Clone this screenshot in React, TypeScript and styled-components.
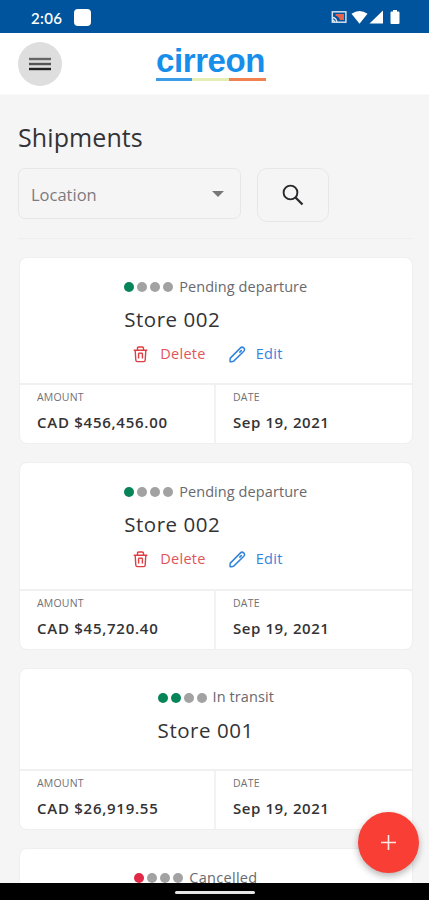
import React from "react";
import styled, { createGlobalStyle } from "styled-components";

const GlobalStyle = createGlobalStyle`
  * { box-sizing: border-box; }
  body { margin: 0; font-family: "Open Sans", "Noto Sans", sans-serif; color: #333336; background: #f6f5f6; }
  button { font: inherit; padding: 0; border: 0; background: none; }
`;

const Screen = styled.div`
  position: relative;
  display: flex;
  flex-direction: column;
  width: 429px;
  height: 900px;
  overflow: hidden;
  background: #f6f5f6;
`;

const StatusBar = styled.div`
  flex: none;
  display: flex;
  align-items: center;
  height: 33px;
  padding: 2px 28px 0 31px;
  background: #00549d;
  color: #fff;
`;

const Clock = styled.span`
  width: 43px;
  font: 600 15px/18px Lato, sans-serif;
  letter-spacing: 0.35px;
  white-space: nowrap;
`;

const Notification = styled.span`
  width: 17px;
  height: 17px;
  border-radius: 4px;
  background: #fff;
`;

const StatusIcons = styled.svg`
  margin-left: auto;
  display: block;
`;

const Header = styled.header`
  flex: none;
  display: grid;
  grid-template-columns: 44px 1fr 44px;
  align-items: center;
  height: 62px;
  padding: 0 25px 0 18px;
  background: #fff;
  border-bottom: 1px solid #f9f8fa;
`;

const MenuButton = styled.button`
  display: grid;
  place-items: center;
  width: 44px;
  height: 44px;
  border-radius: 50%;
  background: #dfdedf;
`;

const Logo = styled.div`
  justify-self: center;
  width: 110px;
  margin-top: -2px;
`;

const LogoWord = styled.div`
  font: 700 33px/34px "Liberation Sans", sans-serif;
  letter-spacing: -0.4px;
  white-space: nowrap;
  color: #168eea;
`;

const LogoRule = styled.div`
  height: 3px;
  background: linear-gradient(90deg, #3c9ce8 0 36px, #e4edb4 36px 73px, #f28150 73px);
`;

const Content = styled.main`
  flex: 1;
  min-height: 0;
  overflow: hidden;
  padding: 24px 16.5px 0 18px;
`;

const Title = styled.h1`
  margin: 0;
  font-size: 25px;
  line-height: 36px;
  font-weight: 400;
  letter-spacing: 0.1px;
`;

const Filters = styled.div`
  display: flex;
  gap: 16px;
  padding: 13px 0 16px;
  border-bottom: 1px solid #eeeeef;
`;

const Select = styled.div`
  display: flex;
  align-items: center;
  justify-content: space-between;
  width: 223px;
  height: 51px;
  padding: 1px 16px 0 12px;
  border: 1px solid #e9e6e9;
  border-radius: 7px;
  font-size: 16.5px;
  color: #7c7b7f;
`;

const SearchButton = styled.button`
  display: grid;
  place-items: center;
  width: 72px;
  height: 54px;
  border: 1px solid #e7e6e8;
  border-radius: 10px;
`;

const CardList = styled.div`
  display: flex;
  flex-direction: column;
  gap: 18px;
  padding: 18px 0 0 1px;
`;

const Card = styled.article<{ $compact?: boolean }>`
  flex: none;
  height: ${(p) => (p.$compact ? 162.5 : 187.3)}px;
  display: flex;
  flex-direction: column;
  border: 1px solid #f0eff0;
  border-radius: 8px;
  background: #fff;
`;

const Summary = styled.div<{ $minWidth?: number }>`
  flex: 1;
  display: flex;
  flex-direction: column;
  align-items: flex-start;
  align-self: center;
  min-width: ${(p) => p.$minWidth ?? 0}px;
  padding-top: 16px;
`;

const StatusLine = styled.div`
  display: flex;
  align-items: center;
  gap: 3px;
  height: 24px;
`;

const Dot = styled.span<{ $color: string }>`
  width: 10px;
  height: 10px;
  margin-top: 2px;
  border-radius: 50%;
  background: ${(p) => p.$color};
`;

const StatusText = styled.span<{ $tracking: number }>`
  margin-left: 3px;
  font-size: 14.5px;
  letter-spacing: ${(p) => p.$tracking}px;
  white-space: nowrap;
  color: #69696d;
`;

const StoreName = styled.div`
  margin-top: 6px;
  font-size: 20.5px;
  line-height: 30px;
  letter-spacing: 0.55px;
  white-space: nowrap;
`;

const Actions = styled.div`
  display: flex;
  align-items: center;
  gap: 23px;
  height: 22px;
  margin-top: 9px;
  padding-left: 9px;
`;

const Action = styled.button<{ $color: string; $gap: number }>`
  display: flex;
  align-items: center;
  gap: ${(p) => p.$gap}px;
  font-size: 14.5px;
  line-height: 22px;
  letter-spacing: 0.3px;
  color: ${(p) => p.$color};
`;

const Details = styled.div`
  display: grid;
  grid-template-columns: 194px 1fr;
  height: 60px;
  border-top: 2px solid #f0f0f1;
`;

const Field = styled.div`
  padding: 4px 0 0 17px;
  & + & { border-left: 2px solid #f2f2f3; }
`;

const Label = styled.div`
  font-size: 10.5px;
  line-height: 16px;
  letter-spacing: 0.2px;
  color: #707074;
`;

const Value = styled.div<{ $tracking: number }>`
  margin-top: 7px;
  font-size: 15px;
  line-height: 20px;
  font-weight: 600;
  letter-spacing: ${(p) => p.$tracking}px;
  white-space: nowrap;
`;

const AddButton = styled.button`
  position: absolute;
  right: 10px;
  bottom: 27px;
  display: grid;
  place-items: center;
  width: 61px;
  height: 61px;
  border-radius: 50%;
  background: #f93e35;
  box-shadow: 0 3px 7px rgba(0, 0, 0, 0.3);
`;

const NavBar = styled.div`
  flex: none;
  display: flex;
  justify-content: center;
  height: 17px;
  padding-top: 8px;
  background: #000;
`;

const Handle = styled.span`
  width: 80px;
  height: 3px;
  border-radius: 2px;
  background: #e4e4e4;
`;

const TrashIcon = () => (
  <svg width="15" height="17" viewBox="0 0 15 17" fill="none" stroke="#df3d41" strokeWidth="1.4">
    <path d="M.7 4.300h13.600M4.500 4V2.200Q4.500 1 5.700 1h3.600q1.200 0 1.200 1.200V4M2.200 4.500l.6 9.500q.1 1.600 1.500 1.600h6.400q1.400 0 1.500-1.600l.6-9.500M5.600 7.300v5.200M9.400 7.300v5.200" />
    <path d="M5.400 7.200h4.200" />
  </svg>
);

const PencilIcon = () => (
  <svg width="17" height="17" viewBox="0 0 17 17" fill="none" stroke="#3183dd" strokeWidth="1.5" strokeLinejoin="round" strokeLinecap="round">
    <path d="M1.300 12.100L11.500 1.900q1.500-1.500 3.200 0t.1 3.300L4.700 15.100Q3.800 15.900 1.100 15.700 1 13 1.300 12.100zM10.800 6.100l1.500-1.500" />
  </svg>
);

const GREEN = "#078458";
const GREY = "#a3a2a3";
const RED = "#df2947";

type Shipment = {
  dots: string[];
  status: string;
  statusTracking: number;
  store?: string;
  amount?: string;
  amountTracking?: number;
  editable?: boolean;
  minWidth?: number;
};

const shipments: Shipment[] = [
  { dots: [GREEN, GREY, GREY, GREY], status: "Pending departure", statusTracking: 0.08, store: "Store 002", amount: "CAD $456,456.00", amountTracking: 0.74, editable: true },
  { dots: [GREEN, GREY, GREY, GREY], status: "Pending departure", statusTracking: 0.08, store: "Store 002", amount: "CAD $45,720.40", amountTracking: 0.74, editable: true },
  { dots: [GREEN, GREEN, GREY, GREY], status: "In transit", statusTracking: 0.08, store: "Store 001", amount: "CAD $26,919.55", amountTracking: 0.74 },
  { dots: [RED, GREY, GREY, GREY], status: "Cancelled", statusTracking: 0.3, minWidth: 163 },
];

const ShipmentCard = ({ item }: { item: Shipment }) => (
  <Card $compact={!item.editable}>
    <Summary $minWidth={item.minWidth}>
      <StatusLine>
        {item.dots.map((color, i) => (
          <Dot key={i} $color={color} />
        ))}
        <StatusText $tracking={item.statusTracking}>{item.status}</StatusText>
      </StatusLine>
      {item.store && <StoreName>{item.store}</StoreName>}
      {item.editable && (
        <Actions>
          <Action $color="#df5559" $gap={12}>
            <TrashIcon />
            Delete
          </Action>
          <Action $color="#3385de" $gap={10}>
            <PencilIcon />
            Edit
          </Action>
        </Actions>
      )}
    </Summary>
    {item.amount && (
      <Details>
        <Field>
          <Label>AMOUNT</Label>
          <Value $tracking={item.amountTracking ?? 0}>{item.amount}</Value>
        </Field>
        <Field>
          <Label>DATE</Label>
          <Value $tracking={0.58}>Sep 19, 2021</Value>
        </Field>
      </Details>
    )}
  </Card>
);

export default function App() {
  return (
    <>
      <GlobalStyle />
      <Screen>
        <StatusBar>
          <Clock>2:06</Clock>
          <Notification />
          <StatusIcons width="70" height="17" viewBox="0 0 70 17">
            <rect x="1.300" y="2.800" width="13.600" height="10.400" fill="none" stroke="#cfe0ee" strokeWidth="1.500" />
            <path d="M4.500 5H13v6H9Q8 7.500 4.500 6.500z" fill="#e86250" />
            <path d="M1 8.500q4.500 0 5 5M1 11q2.300 0 2.500 2.500" fill="none" stroke="#dce9f4" strokeWidth="1.300" />
            <path d="M20.500 4.800Q28.500-1 36.500 4.800L28.500 14.800z" fill="#fff" />
            <path d="M38.500 14.500L52 1.500v13z" fill="#fff" />
            <path d="M62 1h4v1.600h1.500q1 0 1 1V14q0 1-1 1h-7q-1 0-1-1V3.600q0-1 1-1H62z" fill="#fff" />
          </StatusIcons>
        </StatusBar>
        <Header>
          <MenuButton aria-label="Menu">
            <svg width="22" height="14" viewBox="0 0 22 14" strokeWidth="2.400">
              <path d="M0 2h22" stroke="#666" />
              <path d="M0 7h22" stroke="#555" />
              <path d="M0 12h22" stroke="#222" />
            </svg>
          </MenuButton>
          <Logo>
            <LogoWord>cirreon</LogoWord>
            <LogoRule />
          </Logo>
        </Header>
        <Content>
          <Title>Shipments</Title>
          <Filters>
            <Select>
              Location
              <svg width="12" height="6" viewBox="0 0 12 6">
                <path d="M0 0h12L6 6z" fill="#77777a" />
              </svg>
            </Select>
            <SearchButton aria-label="Search">
              <svg width="22" height="22" viewBox="0 0 22 22" fill="none" stroke="#29292c">
                <circle cx="8.500" cy="8.500" r="6.900" strokeWidth="1.900" />
                <path d="M13.500 13.500l7 7" strokeWidth="2.300" />
              </svg>
            </SearchButton>
          </Filters>
          <CardList>
            {shipments.map((item, i) => (
              <ShipmentCard key={i} item={item} />
            ))}
          </CardList>
        </Content>
        <NavBar>
          <Handle />
        </NavBar>
        <AddButton aria-label="Add shipment">
          <svg width="15" height="15" viewBox="0 0 15 15">
            <path d="M7.500 0v15M0 7.500h15" stroke="#ffe9e7" strokeWidth="1.600" />
          </svg>
        </AddButton>
      </Screen>
    </>
  );
}
